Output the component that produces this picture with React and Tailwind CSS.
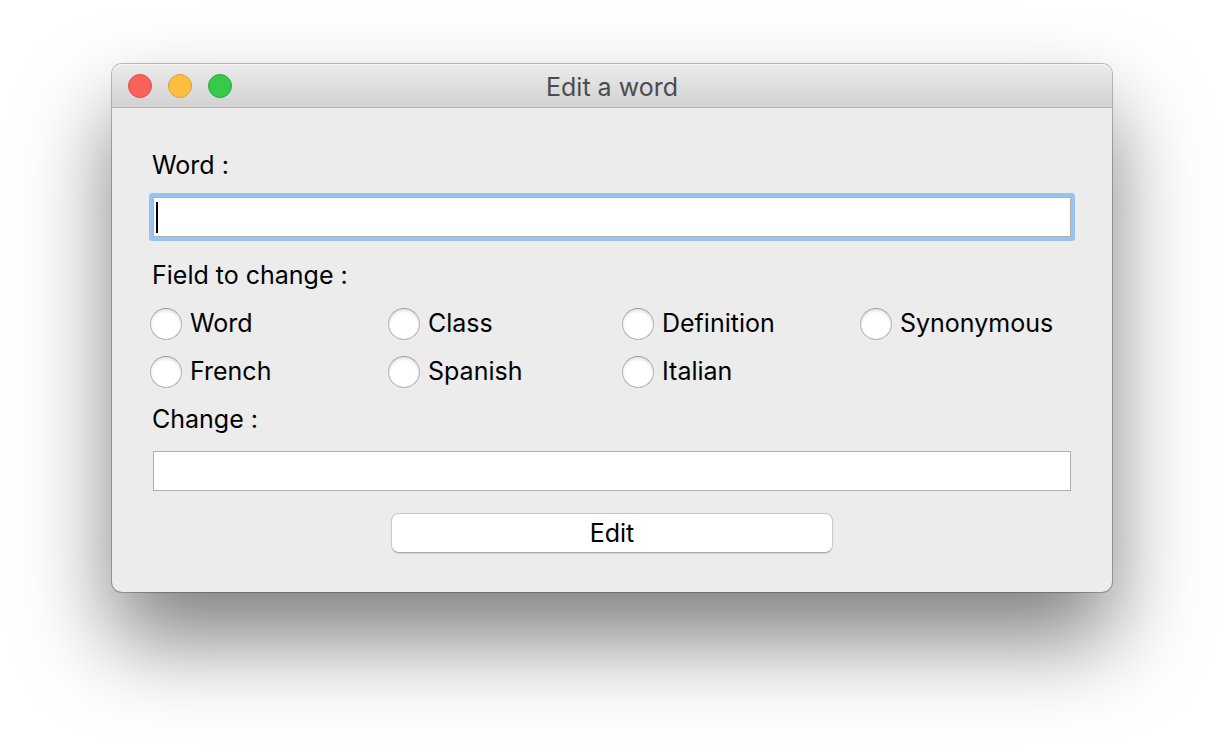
import { useState } from "react";

const FIELDS = ["Word", "Class", "Definition", "Synonymous", "French", "Spanish", "Italian"];

function TitleBar() {
  return (
    <header className="grid h-11 grid-cols-[1fr_auto_1fr] items-center rounded-t-[10px] border-b border-[#b1b1b1] bg-linear-to-b from-[#ebebeb] to-[#d2d2d2] px-4 shadow-[inset_0_1px_0_#f6f6f6]">
      <div className="flex gap-4">
        <button type="button" aria-label="Close" className="size-6 rounded-full border border-[#e24b48] bg-[#fd615c]" />
        <button type="button" aria-label="Minimize" className="size-6 rounded-full border border-[#dfa033] bg-[#febe40]" />
        <button type="button" aria-label="Zoom" className="size-6 rounded-full border border-[#27a93a] bg-[#35ca4b]" />
      </div>
      <h1 className="pt-[2px] text-[25px] leading-8 text-[#4c4c4c]">Edit a word</h1>
    </header>
  );
}

function FieldOption({ name, checked, onSelect }) {
  return (
    <label className="flex h-8 items-start gap-2">
      <input
        type="radio"
        name="field"
        value={name}
        checked={checked}
        onChange={() => onSelect(name)}
        className="size-8 shrink-0 appearance-none rounded-full border border-[#b4b4b4] border-t-[#9c9c9c] bg-white shadow-[inset_0_2px_3px_rgba(0,0,0,0.12)] checked:border-[9px] checked:border-[#2f7cf6]"
      />
      <span className="leading-[30px]">{name}</span>
    </label>
  );
}

export default function App() {
  const [word, setWord] = useState("");
  const [change, setChange] = useState("");
  const [field, setField] = useState("");

  return (
    <main className="min-h-screen bg-white px-28 py-16 font-['Inter','Liberation_Sans',sans-serif] text-[25px] text-black">
      <section className="rounded-[10px] bg-[#ececec] shadow-[0_0_0_1px_rgba(0,0,0,0.25),0_48px_88px_rgba(0,0,0,0.5)]">
        <TitleBar />
        <form className="flex flex-col px-[38px] pt-[41px] pb-[39px]" onSubmit={(e) => e.preventDefault()}>
          <label htmlFor="word" className="px-[2px] leading-8">
            Word :
          </label>
          <div className="relative mx-[3px] mt-4 flex rounded-[1px] ring-4 ring-[#98c4f4]">
            <input
              id="word"
              type="text"
              value={word}
              onChange={(e) => setWord(e.target.value)}
              className="peer h-10 w-full rounded-none border border-[#b0b0b0] bg-white px-1 outline-none"
            />
            <span aria-hidden="true" className="pointer-events-none absolute top-[5px] left-[3px] h-[31px] w-[2px] bg-black peer-focus:hidden" />
          </div>

          <fieldset className="mt-[22px]">
            <legend className="px-[2px] leading-8">Field to change :</legend>
            <div className="mt-[17px] grid grid-cols-[238fr_234fr_238fr_214fr] gap-y-4">
              {FIELDS.map((name) => (
                <FieldOption key={name} name={name} checked={field === name} onSelect={setField} />
              ))}
            </div>
          </fieldset>

          <label htmlFor="change" className="mt-[15px] px-[2px] leading-8">
            Change :
          </label>
          <div className="mx-[3px] mt-4 flex">
            <input
              id="change"
              type="text"
              value={change}
              onChange={(e) => setChange(e.target.value)}
              className="h-10 w-full rounded-none border border-[#b0b0b0] bg-white px-1 outline-none"
            />
          </div>

          <button
            type="submit"
            className="mt-[22px] h-10 w-[442px] max-w-full self-center rounded-lg border border-[#c8c8c8] border-b-[#acacac] bg-white leading-8 shadow-[0_1px_1px_rgba(0,0,0,0.1)]"
          >
            Edit
          </button>
        </form>
      </section>
    </main>
  );
}
